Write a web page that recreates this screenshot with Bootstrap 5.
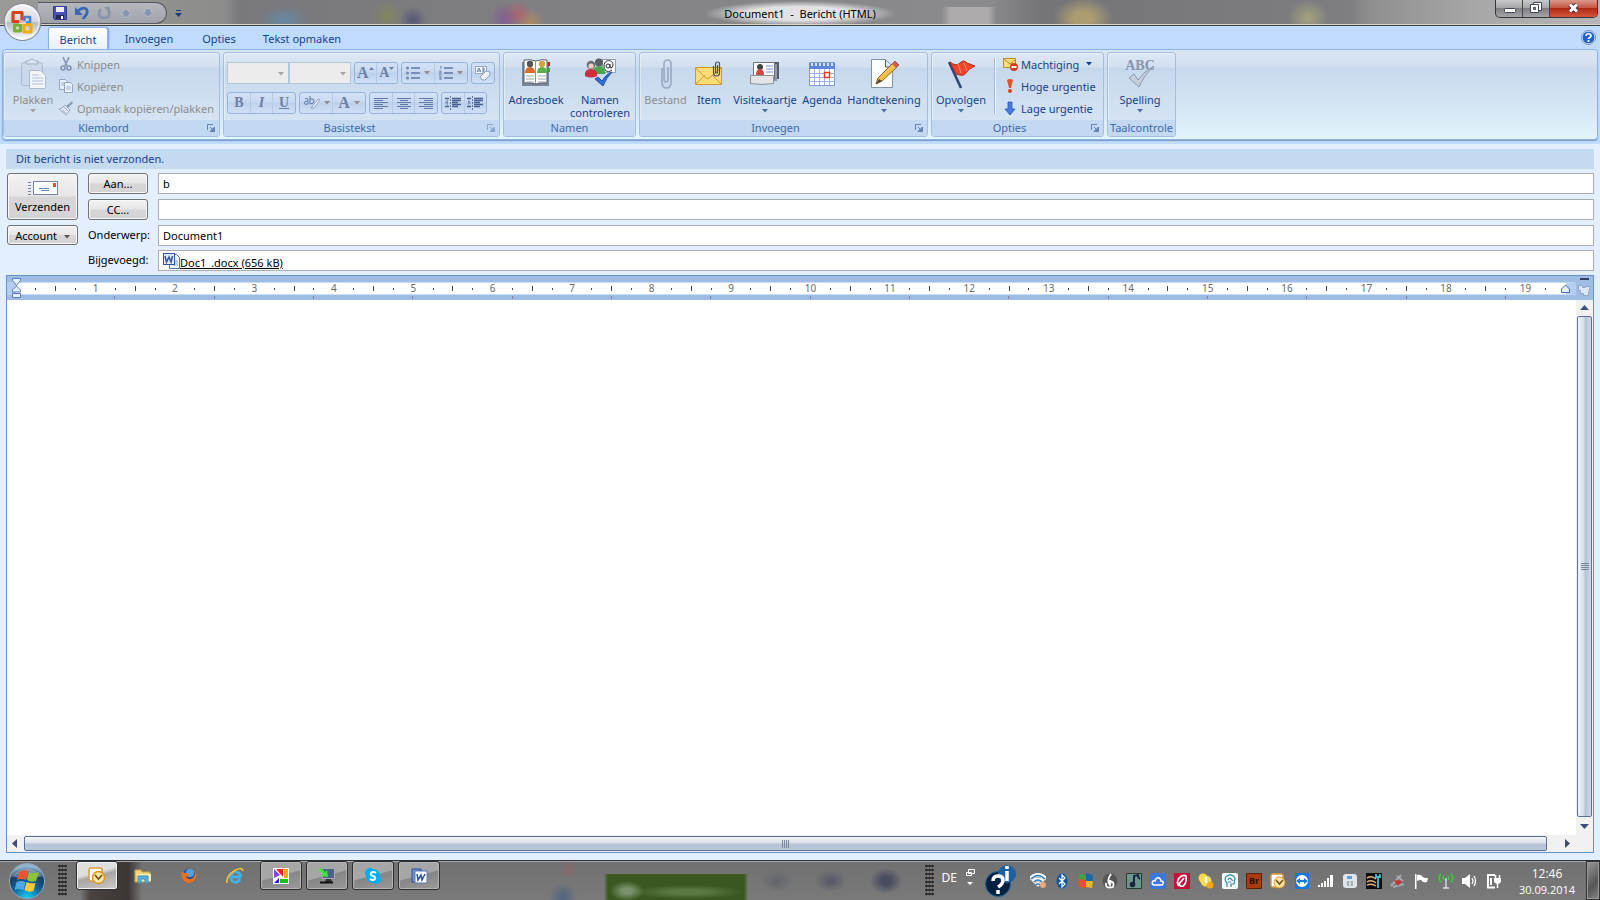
<!DOCTYPE html>
<html lang="nl">
<head>
<meta charset="utf-8">
<meta name="viewport" content="width=device-width, initial-scale=1">
<title>Document1 - Bericht (HTML)</title>
<link href="https://cdn.jsdelivr.net/npm/bootstrap@5.3.0/dist/css/bootstrap.min.css" rel="stylesheet">
<style>
:root{--ink:#15428b;--dim:#8d8d8d;--edge:#8db2e3}
body{font:11px/13px "Noto Sans","Open Sans",sans-serif;color:#000;background:#e3efff;height:100vh;overflow:hidden}
button,input,select{font:inherit;color:inherit}
button{background:none;border:0;padding:0}
svg{display:block;flex:none}
/* window title */
.titlebar{height:26px;border-bottom:1px solid #3a3d42;box-shadow:inset 0 -1px #d8d5c8;background:
 radial-gradient(ellipse 24px 14px at 284px 20px,#5b93b5aa,transparent),
 radial-gradient(ellipse 16px 16px at 387px 16px,#8a8c4699,transparent),
 radial-gradient(ellipse 14px 14px at 413px 20px,#3d3e7299,transparent),
 radial-gradient(ellipse 14px 18px at 504px 20px,#8148a099,transparent),
 radial-gradient(ellipse 16px 14px at 517px 14px,#c05866aa,transparent),
 radial-gradient(ellipse 14px 14px at 530px 22px,#c9924e99,transparent),
 linear-gradient(90deg,#c8c4c400 942px,#bdbabaaa 950px,#bdbabaaa 988px,#c8c4c400 996px) 0 7px no-repeat,
 radial-gradient(ellipse 30px 20px at 1083px 18px,#c0ab6cbb 30%,transparent),
 radial-gradient(ellipse 20px 18px at 1308px 18px,#b5b07cbb,transparent),
 linear-gradient(90deg,#9a9a98 0,#8c8c8b 225px,#78787d 240px,#7d7d80 440px,#858588 700px,#8b8b8f 990px,#757579 1040px,#7e7e82 1350px,#8f8f8f 1370px,#a8a8a8 1480px,#b6b6b6)}
.orb{left:3px;top:2px;z-index:3}
.quick{margin-left:38px;width:129px;height:22px;margin-top:2px;border:1px solid #55585e;border-left:0;border-radius:0 11px 11px 0;background:linear-gradient(#b4b7bc,#a0a4aa);padding-left:14px;gap:6px}
.quick button{width:16px;height:16px}
.wintitle{font-size:11px;line-height:27px}
.wintitle span{background:radial-gradient(closest-side,#e2e2e4 55%,#e2e2e400);padding:5px 20px}
.winbtns{height:18px;border:1px solid #33353a;border-top:0;border-radius:0 0 5px 5px;overflow:hidden;margin-right:2px;background:linear-gradient(#c9c9cc,#a6a6a9 45%,#7f7f84 50%,#a5a5a9)}
.winbtns button{width:27px;border-right:1px solid #44464b}
.winbtns .shut{width:47px;border:0;background:linear-gradient(#d99a8d,#c65744 45%,#b02a12 50%,#d4553a)}
/* tabs */
.tabsrow{height:23px;background:#bfdbff;padding-left:48px;color:var(--ink)}
.tabsrow .tab{color:var(--ink);text-decoration:none;line-height:25px;text-align:center}
.tabsrow .on{background:linear-gradient(#fff,#e8f1fb);border:1px solid #8db2e3;border-bottom:0;border-radius:3px 3px 0 0;margin-top:1px;line-height:23px;box-shadow:1px 0 2px #6f9be0}
.w-82{width:82px}.w-60{width:60px}.w-108{width:108px}
/* ribbon */
.ribbonwrap{background:#bfdbff;padding:0 2px 4px}
.ribbon{height:91px;border:1px solid var(--edge);border-radius:4px;padding:2px 0;gap:3px;background:linear-gradient(#dbe6f4 0,#cfddee 17px,#c9d9ed 18px,#d9e8f6 66px,#e3f5fd);box-shadow:0 1px 1px #7b97c0}
.group{height:85px;border:1px solid #a3bfdb;border-radius:3px;box-shadow:inset 1px 1px #ffffff66;background:linear-gradient(#dee8f5 0,#d1dfee 14px,#c7d8ed 15px,#d9e7f5);color:var(--ink);overflow:hidden}
.group .foot{height:16px;line-height:16px;background:#c2d9f1;color:#3e6aaa;text-align:center;position:relative;white-space:nowrap}
.launch{position:absolute;right:4px;top:4px}
.big{padding-top:5px;width:64px;line-height:13px;white-space:nowrap;display:flex;flex-direction:column;align-items:center}
.big>svg:first-child{margin-bottom:3px}
.big .arr{margin-top:3px;color:#4a6fa8}
.off .arr{color:inherit}
.smallb{height:22px;display:flex;align-items:center;gap:3px;white-space:nowrap}
.off{color:var(--dim)}
.off svg{opacity:.75}
.g-klem{width:217px}.g-bas{width:277px}.g-nam{width:133px}.g-inv{width:289px}.g-opt{width:173px}.g-taal{width:69px}
.w-plak{width:50px}.w-43{width:43px}.w-44{width:44px}.w-46{width:46px}.w-68{width:68px}.w-78{width:78px}.w-58{width:58px}
.fontrows{padding:9px 3px 0}
.rowgap{gap:3px}
.combo{appearance:none;height:22px;width:62px;border:1px solid #b4c6dc;background:#ececec;border-radius:0;opacity:1}
.combobox{position:relative}
.combobox svg{position:absolute;right:5px;top:10px}
.set{height:22px;border:1px solid #94b3de;border-radius:3px;background:linear-gradient(#d3e1f4,#c8d9f0 45%,#bdd1ec 50%,#cfe0f5);color:#6c7fa6}
.set button{flex:1;display:flex;align-items:center;justify-content:center;gap:4px;border-right:1px solid #b4cae8}
.set button:last-child{border:0}
.set .tight{gap:0}
.s24{width:24px}.s44{width:44px}.s46{width:46px}.s67{width:67px}.s69{width:69px}
.serif{font:bold 14px/18px "Liberation Serif",serif}
.divide{width:2px;background:#9db8dc;border-right:1px solid #f2f7fd;margin:5px 6px 6px 4px}
/* message header */
.info{margin:5px 6px 4px;height:20px;line-height:20px;background:#c3daf1;color:var(--ink);padding-left:10px}
.head{display:grid;grid-template-columns:71px 60px 1fr;grid-template-rows:21px 21px 20px 21px;gap:5px 10px;padding:0 6px 4px 7px}
.grey{border:1px solid #717171;border-radius:3px;background:linear-gradient(#f3f3f3,#e6e6e6 48%,#d6d6d6 52%,#d4d4d4);box-shadow:inset 0 0 0 1px #f8f8f8}
.send{grid-row:span 2}
.field{border:1px solid #abadb3;background:#fff;width:100%;padding:0 4px;min-width:0;border-radius:0;height:21px}
.head label,.head .lab{line-height:20px;white-space:nowrap}
.head a{color:#000}
/* editor */
.editor{margin:0 6px 7px;border:1px solid #6593cf;background:#fff;min-height:0}
.ruler{height:24px;background:#9ebce4;position:relative}
.ruler .scale{height:13px;margin-top:6px;background:#fff;border-top:1px solid #c8dcf4;border-bottom:1px solid #c8dcf4;color:#6a6a6a;font:10px/11px "Noto Sans",sans-serif;padding:0 11px 0 10px;border-left:9px solid #b4cdf0;border-right:10px solid #b4cdf0}
.scale span{flex:1 1 0;width:0;display:flex;justify-content:center;align-items:center}
.scale i{width:1px;height:5px;background:#445}
.scale i.dot{height:2px}
.stops{height:5px;padding:1px 70px 1px 9px}
.stops span{flex:1;border-right:1px solid #7d8796}
.mark1{position:absolute;left:5px;top:2px}
.mark2{position:absolute;right:5px;top:8px}
.vbar{width:17px;background:#f1f1f1}
.corner{height:24px;background:#9ebce4}
.vthumb{border:1px solid #5d6f96;border-radius:2px;margin:0 1px;background:linear-gradient(90deg,#f2f4f8,#d5dce8 45%,#b4c1d6 55%,#d0d9e8)}
.hbar{height:17px;background:#f1f1f1}
.hthumb{border:1px solid #5d6f96;border-radius:2px;margin:1px 0;background:linear-gradient(#f4f6fa,#dbe0ea 45%,#b6c2d6 55%,#b9c6da)}
/* taskbar */
.taskbar{height:40px;border-top:1px solid #2b2d31;box-shadow:inset 0 1px #a9a9a9;color:#fff;background:
 linear-gradient(90deg,#3b363300 80px,#4a4441 90px,#3b3633 128px,#3b363300 142px),
 radial-gradient(circle 10px at 569px 9px,#96666699,transparent),
 radial-gradient(circle 14px at 563px 36px,#3f5c84bb,transparent),
 radial-gradient(ellipse 17px 10px at 627px 30px,#8aa07acc 30%,transparent),
 radial-gradient(ellipse 56px 7px at 688px 31px,#6d8a55aa 30%,transparent),
 linear-gradient(90deg,#70707000 604px,#39571f 608px,#39571f 744px,#70707000 748px) 0 13px no-repeat,
 radial-gradient(ellipse 16px 11px at 777px 20px,#5b5f6bcc,transparent),
 radial-gradient(ellipse 16px 11px at 831px 20px,#4b5063cc,transparent),
 radial-gradient(ellipse 16px 13px at 886px 20px,#3d425acc 30%,transparent),
 linear-gradient(#707070,#7a7a7a)}
.grip{width:9px;height:32px;margin-top:3px;background:radial-gradient(circle,#2a2a2a 1px,#8c8c8c 2px) 0 0/3px 4px}
.grip1{margin:3px 9px 0 12px}
.task{width:42px;height:29px;display:flex;align-items:center;justify-content:center}
.task.run{border:1px solid #2d2d2d;border-radius:3px;box-shadow:inset 0 0 0 1px #b5b5b5;background:linear-gradient(165deg,#a6a6a6 48%,#868686 52%,#9a9a9a)}
.task.act{background:linear-gradient(165deg,#dedede 40%,#a9a5a2 52%,#cfcbc8);box-shadow:inset 0 0 0 1px #f1f1f1}
.lang{font-size:12px;margin:10px 9px 0 8px}
.helpico{margin:4px 0 0 10px}
.tray{padding-top:12px;gap:8px;margin-left:12px}
.clock{width:84px;padding:5px 0 0 6px;font:12px/16px "Open Sans",sans-serif;text-align:center}
.clock span{font-size:11px}
.peek{width:14px;border:1px solid #333;box-shadow:inset 0 0 0 1px #999;background:linear-gradient(135deg,#999,#555 60%,#888)}
</style>
</head>
<body class="d-flex flex-column">
<svg width="0" height="0" class="position-absolute"><defs>
<symbol id="dn" viewBox="0 0 6 4"><path d="M0 0h6L3 3.500z" fill="currentColor"/></symbol>
<symbol id="lau" viewBox="0 0 8 8"><path d="M.5 6V.5H6" fill="none" stroke="#6583b0"/><path d="M3 3l2 2M7.500 3v4.500H3z" fill="#6583b0" stroke="#6583b0"/></symbol>
<linearGradient id="orbg" x2="0" y2="1"><stop stop-color="#f6f6f8"/><stop offset=".48" stop-color="#d5d8de"/><stop offset=".52" stop-color="#b8bcc5"/><stop offset="1" stop-color="#fff"/></linearGradient>
<radialGradient id="wing" cx=".5" cy="1" r=".9"><stop stop-color="#19d3fa"/><stop offset=".5" stop-color="#0c5f97"/><stop offset=".8" stop-color="#1b3d61"/><stop offset="1" stop-color="#8fb2cc"/></radialGradient>
</defs></svg>

<header class="titlebar d-flex position-relative flex-shrink-0">
 <button class="orb position-absolute" aria-label="Office"><svg width="39" height="39" viewBox="0 0 39 39"><circle cx="19.500" cy="20" r="18.500" fill="url(#orbg)" stroke="#7b808a"/><circle cx="19.500" cy="20" r="16.500" fill="none" stroke="#fff" opacity=".7"/><g fill="none" stroke-linejoin="round"><rect x="10" y="10.500" width="9" height="9" stroke="#d4431a" stroke-width="3.200"/><rect x="21.500" y="15" width="5.500" height="5.500" stroke="#3f86d4" stroke-width="2.600"/><rect x="11.500" y="23" width="6" height="6" stroke="#74b030" stroke-width="2.800"/><rect x="21" y="22.500" width="7" height="7.500" stroke="#f2ab18" stroke-width="3.200"/></g><path d="M16 18h4v4h-4zM20 19h3v3h-3z" fill="#fff" opacity=".6"/></svg></button>
 <div class="quick d-flex align-items-center flex-shrink-0">
  <button aria-label="Opslaan"><svg width="16" height="16"><path d="M1.500 1.500h13v13h-12l-1-1z" fill="#4a52b5" stroke="#333a8c"/><path d="M4 2h8v5H4z" fill="#eef"/><path d="M4 10h8v4H4z" fill="#222a55"/><path d="M9 11h2v3H9z" fill="#fff"/></svg></button>
  <button aria-label="Ongedaan maken"><svg width="16" height="16"><path d="M4 6c5-5 10-3 9 2-1 3-3 4-4 6" fill="none" stroke="#3b66b8" stroke-width="2.800"/><path d="M1 2v8h8z" fill="#3b66b8"/></svg></button>
  <button aria-label="Opnieuw"><svg width="16" height="16"><path d="M5 4c-4 4-2 9 3 9 5 0 7-5 4-8" fill="none" stroke="#8593ab" stroke-width="2.400"/><path d="M8 2h6v5z" fill="#8593ab"/></svg></button>
  <button aria-label="Vorige"><svg width="16" height="16"><path d="M8 4l6 5h-3v3H5V9H2z" fill="#8796ae" stroke="#b7c0cd" stroke-width=".8"/></svg></button>
  <button aria-label="Volgende"><svg width="16" height="16"><path d="M8 12l6-5h-3V4H5v3H2z" fill="#8796ae" stroke="#b7c0cd" stroke-width=".8"/></svg></button>
 </div>
 <button class="ms-2" aria-label="Werkbalk aanpassen"><svg width="7" height="8"><path d="M1 1.500h5" stroke="#1a3a78"/><path d="M0 4h7L3.500 8z" fill="#1a3a78"/></svg></button>
 <div class="wintitle position-absolute start-0 end-0 text-center pe-none"><span>Document1&nbsp; -&nbsp; Bericht (HTML)</span></div>
 <div class="winbtns d-flex ms-auto">
  <button aria-label="Minimaliseren"><svg width="26" height="17"><rect x="8.500" y="8.500" width="11" height="4" rx="1" fill="#fff" stroke="#444659"/></svg></button>
  <button aria-label="Verkleinen"><svg width="26" height="17"><path d="M10.500 2.500h8v8h-8z" fill="#fff" stroke="#444659"/><path d="M7.500 4.500h8v8h-8z" fill="#fff" stroke="#444659"/><path d="M10.500 7.500h2v2h-2z" fill="#999" stroke="#444659"/></svg></button>
  <button class="shut" aria-label="Sluiten"><svg width="47" height="17"><path d="M20 4.500l7 7m0-7l-7 7" stroke="#4a3340" stroke-width="5"/><path d="M20 4.500l7 7m0-7l-7 7" stroke="#fff" stroke-width="3"/></svg></button>
 </div>
</header>

<nav class="tabsrow d-flex flex-shrink-0">
 <a href="#" class="tab on w-60">Bericht</a><a href="#" class="tab w-82">Invoegen</a><a href="#" class="tab w-58">Opties</a><a href="#" class="tab w-108">Tekst opmaken</a>
 <button class="ms-auto me-1" aria-label="Help"><svg width="15" height="15"><circle cx="7.500" cy="7.500" r="6.500" fill="#2360d0" stroke="#fff"/><circle cx="7.500" cy="7.500" r="7" fill="none" stroke="#6a8cc4"/><path d="M5 6c0-3 5-3 5 0 0 1.500-2.500 1.500-2.500 3M7.500 10v2" fill="none" stroke="#fff" stroke-width="1.700"/></svg></button>
</nav>

<div class="ribbonwrap flex-shrink-0"><div class="ribbon d-flex">
 <section class="group g-klem flex-shrink-0 d-flex flex-column">
  <div class="d-flex flex-fill ps-1">
   <button class="big w-plak off" disabled><svg width="32" height="32"><rect x="4.500" y="4.500" width="21" height="23" rx="2" fill="#ccd8ea" stroke="#9fafc8"/><path d="M9 6V3h3q3-4 6 0h3v3z" fill="#dfe6f0" stroke="#8d9db8"/><path d="M12.500 12.500h11l5 5v13h-16z" fill="#fff" stroke="#9fafc8"/><path d="M15 17h7m-7 3h11m-11 3h11m-11 3h11" stroke="#a9bbd8"/></svg>Plakken<svg class="arr" width="6" height="4"><use href="#dn"/></svg></button>
   <div class="off">
    <button class="smallb" disabled><svg width="16" height="16"><path d="M5 1l4 9M11 1L7 10" stroke="#6d7c98" stroke-width="1.600"/><g fill="none" stroke="#6d7c98" stroke-width="1.600"><circle cx="5" cy="12" r="2"/><circle cx="11" cy="12" r="2"/></g></svg>Knippen</button>
    <button class="smallb" disabled><svg width="16" height="16"><g fill="#f2f6fb" stroke="#7f93b5"><path d="M1.500 1.500h6l2 2v8h-8z"/><path d="M6.500 4.500h6l2 2v8h-8z"/></g><path d="M3 5h3m-3 2h3m2 2h5m-5 2h5" stroke="#93a8c9"/></svg>Kopiëren</button>
    <button class="smallb" disabled><svg width="16" height="16"><path d="M14 1l1 2-5 5-2-2z" fill="#7c8ca8"/><path d="M7 5l5 5-4 5-7-6 3-1z" fill="#e8edf4" stroke="#8494b0"/><path d="M4 10l4 3M6 7l4 4" stroke="#8494b0"/></svg>Opmaak kopiëren/plakken</button>
   </div>
  </div>
  <div class="foot"><span class="me-3">Klembord</span><svg class="launch" width="8" height="8"><use href="#lau"/></svg></div>
 </section>

 <section class="group g-bas flex-shrink-0 d-flex flex-column">
  <div class="flex-fill fontrows">
   <div class="d-flex rowgap">
    <div class="d-flex">
     <div class="combobox off"><select class="combo" disabled aria-label="Lettertype"><option></option></select><svg width="6" height="4"><use href="#dn"/></svg></div>
     <div class="combobox off"><select class="combo" disabled aria-label="Tekengrootte"><option></option></select><svg width="6" height="4"><use href="#dn"/></svg></div>
    </div>
    <div class="set d-flex s44"><button class="tight" disabled aria-label="Groter"><span class="serif fs-6">A</span><svg width="5" height="12"><path d="M0 3h5L2.500 0z" fill="#6c7fa6"/></svg></button><button class="tight" disabled aria-label="Kleiner"><span class="serif">A</span><svg width="5" height="12"><path d="M0 0h5L2.500 3z" fill="#6c7fa6"/></svg></button></div>
    <div class="set d-flex s67"><button disabled aria-label="Opsommingstekens"><svg width="14" height="14"><path d="M5 2h9M5 7h9M5 12h9" stroke="#5f78a5" stroke-width="1.300"/><g fill="#7288b0"><circle cx="1.500" cy="2" r="1.500"/><circle cx="1.500" cy="7" r="1.500"/><circle cx="1.500" cy="12" r="1.500"/></g></svg><svg class="off" width="6" height="4"><use href="#dn"/></svg></button><button disabled aria-label="Nummering"><svg width="14" height="14"><path d="M5 2h9M5 7h9M5 12h9" stroke="#5f78a5" stroke-width="1.300"/><path d="M1 0h1v3M0 5h2v2H0v1h3M0 10h2v4H0m0-2h2" fill="none" stroke="#7288b0"/></svg><svg class="off" width="6" height="4"><use href="#dn"/></svg></button></div>
    <div class="set d-flex s24"><button disabled aria-label="Opmaak wissen"><svg width="18" height="18"><rect x="1.500" y="2.500" width="11" height="7" fill="#fff" stroke="#93a7c8"/><path d="M3 8l2-4 2 4M4 7h2m2-3h2v4H8M8 6h2" stroke="#5f78a5" fill="none"/><path d="M6 13l6-6 4 1v3l-5 5H8z" fill="#eef2f8" stroke="#8ba0c2"/></svg></button></div>
   </div>
   <div class="d-flex rowgap pt-2">
    <div class="set d-flex s69"><button disabled class="serif">B</button><button disabled class="serif fst-italic">I</button><button disabled class="serif text-decoration-underline">U</button></div>
    <div class="set d-flex s67"><button disabled aria-label="Markeren"><svg width="17" height="16"><path d="M2 4q3-2 3 1v4q-4 1-4-1t4-2M7 1v8q4 0 4-3T7 4" fill="none" stroke="#5f78a5"/><path d="M8 13l7-9 2 1-6 8z" fill="#eef2f8" stroke="#8ba0c2"/></svg><svg class="off" width="6" height="4"><use href="#dn"/></svg></button><button disabled><span class="serif fs-6">A</span><svg class="off" width="6" height="4"><use href="#dn"/></svg></button></div>
    <div class="set d-flex s69"><button disabled aria-label="Links"><svg width="14" height="12"><path d="M0 1.500h14M0 3.500h9M0 5.500h14M0 7.500h9M0 9.500h14M0 11.500h9" stroke="#5f78a5"/></svg></button><button disabled aria-label="Midden"><svg width="14" height="12"><path d="M0 1.500h14M3 3.500h8M0 5.500h14M3 7.500h8M0 9.500h14M3 11.500h8" stroke="#5f78a5"/></svg></button><button disabled aria-label="Rechts"><svg width="14" height="12"><path d="M0 1.500h14M5 3.500h9M0 5.500h14M5 7.500h9M0 9.500h14M5 11.500h9" stroke="#5f78a5"/></svg></button></div>
    <div class="set d-flex s46"><button disabled aria-label="Minder inspringen"><svg width="16" height="14"><path d="M0 2.500h4M7 2.500h9M7 4.500h9M7 6.500h6M7 8.500h9M0 10.500h4M7 10.500h6" stroke="#46608f" stroke-width="1.300"/><path d="M5.500 0v14" stroke="#5f78a5" stroke-dasharray="2 1"/><path d="M0 6.500l3-3v6z" fill="#7d93bb"/></svg></button><button disabled aria-label="Meer inspringen"><svg width="16" height="14"><path d="M0 2.500h4M7 2.500h9M7 4.500h9M7 6.500h6M7 8.500h9M0 10.500h4M7 10.500h6" stroke="#46608f" stroke-width="1.300"/><path d="M5.500 0v14" stroke="#5f78a5" stroke-dasharray="2 1"/><path d="M4 6.500l-3-3v6z" fill="#7d93bb"/></svg></button></div>
   </div>
  </div>
  <div class="foot"><span class="me-4">Basistekst</span><svg class="launch" width="8" height="8" opacity=".6"><use href="#lau"/></svg></div>
 </section>

 <section class="group g-nam flex-shrink-0 d-flex flex-column">
  <div class="d-flex flex-fill">
   <button class="big"><svg width="32" height="32"><path d="M2 4h27v24H2z" fill="#7a8799"/><path d="M4 2q6-1 12 1 6-2 11-1v23q-6-1-11 1-6-2-12-1z" fill="#fff" stroke="#55606f"/><path d="M15.500 3v23" stroke="#8a93a0"/><path d="M28 4h2v4h-2z" fill="#c22"/><path d="M28 10h2v4h-2z" fill="#3a3"/><circle cx="10" cy="6" r="3.200" fill="#555"/><path d="M5 15q0-6 5-6t5 6z" fill="#d9692a"/><circle cx="22" cy="6" r="3.200" fill="#d9a23a"/><path d="M17 15q0-6 5-6t5 6z" fill="#5cb043"/><path d="M6 18h8m-8 3h8m-8 3h8m4-6h8m-8 3h8m-8 3h8" stroke="#9aa5b5"/></svg>Adresboek</button>
   <button class="big"><svg width="32" height="32"><path d="M18.500 1.500h13v13h-13z" fill="#f4f7fb" stroke="#93a0b4"/><circle cx="24" cy="8" r="2" fill="none" stroke="#333"/><path d="M26 6v4q3 0 3-3c0-6-9-6-9 1s6 6 8 4" fill="none" stroke="#333"/><circle cx="15" cy="4.500" r="4" fill="#595f66"/><path d="M9 16q0-8 6-8t6 8z" fill="#44a648"/><circle cx="7" cy="7" r="4.300" fill="#666b72"/><circle cx="7" cy="8" r="2.600" fill="#efd3bd"/><path d="M1 18q-1-7 6-7t6 7q-6 3-12 0z" fill="#c9303a"/><path d="M11 21l3-2 4 4q4-7 10-9-6 6-9 14z" fill="#2a6fd6" stroke="#1c50a8"/></svg>Namen<br>controleren</button>
  </div>
  <div class="foot">Namen</div>
 </section>

 <section class="group g-inv flex-shrink-0 d-flex flex-column">
  <div class="d-flex flex-fill ps-1">
   <button class="big w-43 off" disabled><svg width="32" height="32"><path d="M12 10v14q0 6 4.500 6t4.500-6V6q0-4-3.500-4T14 6v15q0 3 2 3t2-3V9" fill="none" stroke="#8d9cb8" stroke-width="1.700"/></svg>Bestand</button>
   <button class="big w-44"><svg width="32" height="32"><path d="M2.500 9.500h26v17h-26z" fill="#fbdc75" stroke="#c89b38"/><path d="M3 26l9-9M28 26l-9-9M3 10q12 14 13 10L28 10" fill="none" stroke="#c89b38"/><path d="M20.500 8v7q0 3 3 3t3-3V6q0-2-2-2t-2 2v9h2V7" fill="none" stroke="#4a5260" stroke-width="1.200"/></svg>Item</button>
   <button class="big w-68"><svg width="32" height="32"><path d="M10 4h20v17H10z" fill="#555d68"/><path d="M8 6h20v17H8z" fill="#909aa8"/><path d="M4.500 4.500h21v17h-21z" fill="#fff" stroke="#6b7480"/><circle cx="11" cy="9" r="3" fill="#444"/><path d="M7 17q0-6 4-6t4 6z" fill="#cf4a3c"/><path d="M17 8h7m-7 3h7m-7 3h7" stroke="#6c93d0"/><path d="M1.500 17.500h23v8q-12 2-23 0z" fill="#e2e4e8" stroke="#8b919b"/></svg>Visitekaartje<svg class="arr" width="6" height="4"><use href="#dn"/></svg></button>
   <button class="big w-46"><svg width="32" height="32"><path d="M3.500 4.500h25v23h-25z" fill="#fff" stroke="#7f9bd0"/><path d="M3 5h26v6H3z" fill="#5f86d8"/><path d="M6 5v3m4-3v3m4-3v3m4-3v3m4-3v3m4-3v3" stroke="#fff" stroke-width="1.500"/><path d="M4 15.500h24M4 19.500h24M4 23.500h24M8.500 11v16M13.500 11v16M18.500 11v16M23.500 11v16" stroke="#9cb4e0"/><rect x="18.500" y="14.500" width="5" height="5" fill="#fff" stroke="#e2401c" stroke-width="1.500"/></svg>Agenda</button>
   <button class="big w-78"><svg width="32" height="32"><path d="M3.500 1.500h14l7 7v21h-21z" fill="#fff" stroke="#8390a6"/><path d="M17.500 2v7h7" fill="#dfe7f2" stroke="#4a5b7a"/><path d="M27 3l4 4L14 23l-6 3 2-6z" fill="#f4bf4a" stroke="#8c6420"/><path d="M27 3l4 4-3 3-4-4z" fill="#c9605a"/><path d="M8 26l3-5 3 2z" fill="#444"/></svg>Handtekening<svg class="arr" width="6" height="4"><use href="#dn"/></svg></button>
  </div>
  <div class="foot"><span class="me-3">Invoegen</span><svg class="launch" width="8" height="8"><use href="#lau"/></svg></div>
 </section>

 <section class="group g-opt flex-shrink-0 d-flex flex-column">
  <div class="d-flex flex-fill">
   <button class="big w-58 ms-0"><svg width="32" height="32"><path d="M4 4l12 26" stroke="#2e4775" stroke-width="2.600"/><path d="M5 4q6 5 10 1t7 0l8 3q-7 3-9 7t-10 1z" fill="#e8472c" stroke="#b32d18"/><path d="M13 6l3 9m3-10l3 8" stroke="#f58a70"/></svg>Opvolgen<svg class="arr" width="6" height="4"><use href="#dn"/></svg></button>
   <span class="divide"></span>
   <div>
    <button class="smallb"><svg width="16" height="16"><path d="M1.500 2.500h12v9h-12z" fill="#fbdc75" stroke="#b58b2e"/><path d="M2 3l6 5 6-5" fill="none" stroke="#b58b2e"/><circle cx="12" cy="11" r="4" fill="#d83a20"/><path d="M9.500 11h5" stroke="#fff" stroke-width="2"/></svg>Machtiging<svg class="ms-1" width="6" height="4"><use href="#dn"/></svg></button>
    <button class="smallb"><svg width="16" height="16"><path d="M5 2q3-2 6 0L9 10H7z" fill="#e8502c"/><circle cx="8" cy="13" r="2" fill="#d8401e"/></svg>Hoge urgentie</button>
    <button class="smallb"><svg width="16" height="16"><path d="M6 2h4v7h3l-5 6-5-6h3z" fill="#4a7be0" stroke="#2c50a8" stroke-width=".8"/></svg>Lage urgentie</button>
   </div>
  </div>
  <div class="foot"><span class="me-3">Opties</span><svg class="launch" width="8" height="8"><use href="#lau"/></svg></div>
 </section>

 <section class="group g-taal flex-shrink-0 d-flex flex-column">
  <div class="flex-fill">
   <button class="big"><svg width="32" height="32"><text x="16" y="12" text-anchor="middle" font-family="Liberation Serif" font-weight="bold" font-size="14" fill="#8795ad">ABC</text><path d="M5 20l5-4 4 6q6-9 16-14-10 9-15 21z" fill="#c5cedd" stroke="#8a98b2"/></svg>Spelling<svg class="arr" width="6" height="4"><use href="#dn"/></svg></button>
  </div>
  <div class="foot">Taalcontrole</div>
 </section>
</div></div>

<div class="info flex-shrink-0">Dit bericht is niet verzonden.</div>
<form class="head flex-shrink-0">
 <button type="button" class="grey send d-flex flex-column align-items-center justify-content-center"><svg width="30" height="16" class="mb-1"><rect x="5.500" y="1.500" width="24" height="13" fill="#fff" stroke="#7886a3"/><path d="M0 2.500h3m-3 3h3m-3 3h3m-3 3h3m-3 3h3" stroke="#7886a3"/><path d="M25 3h3v4h-3z" fill="#e0502c"/><path d="M11 8.500h10m-8 2h8" stroke="#6b83b8"/></svg>Verzenden</button>
 <button type="button" class="grey">Aan...</button><input class="field" aria-label="Aan" value="b">
 <button type="button" class="grey">CC...</button><input class="field" aria-label="CC" value="">
 <button type="button" class="grey">Account&nbsp;<svg class="d-inline-block ms-1 align-middle" width="6" height="4" color="#555"><use href="#dn"/></svg></button>
 <label for="subj">Onderwerp:</label><input class="field" id="subj" value="Document1">
 <span></span><span class="lab">Bijgevoegd:</span>
 <div class="field d-flex align-items-center"><svg width="17" height="17"><path d="M6.500 2.500h7l3 3v11h-10z" fill="#f4f8ff" stroke="#4c73b8"/><path d="M9 9h6m-6 2h6m-6 2h6" stroke="#8aa8dc"/><rect x=".5" y="1.500" width="11" height="11" fill="#dfe9f9" stroke="#2c55a8"/><path d="M2 4l1.500 6L6 5l2 5 1.500-6" fill="none" stroke="#2c55a8" stroke-width="1.500"/></svg><a href="#" class="pt-1">Doc1_.docx (656 kB)</a></div>
</form>

<main class="editor d-flex flex-column flex-grow-1">
 <div class="d-flex flex-grow-1">
  <div class="flex-grow-1 d-flex flex-column">
   <div class="ruler d-flex flex-column">
    <div class="scale d-flex" id="scale"></div>
    <div class="stops d-flex" id="stops"></div>
    <svg class="mark1" width="10" height="20" fill="#e6f0fc" stroke="#5a7fb8"><path d="M.5.500h8v2l-4 5-4-5zM4.500 8l4 4v2h-8v-2zM.5 15.500h8v4h-8z"/></svg>
    <svg class="mark2" width="10" height="10" fill="#e6f0fc" stroke="#4468a8"><path d="M4.500 1l4 4v3.500h-8V5z"/></svg>
   </div>
   <div class="flex-grow-1" contenteditable="true" role="textbox" aria-label="Bericht"></div>
  </div>
  <div class="vbar d-flex flex-column align-items-center">
   <div class="corner w-100"><svg width="16" height="24"><path d="M4 3h9" stroke="#2f3f66" stroke-width="2"/><path d="M2.500 9.500h4v2h3v-1h4v5h-1v4h-5v-2h-3v-3h-2z" fill="#dce8f8" stroke="#8fa9cf"/></svg></div>
   <svg width="9" height="16"><path d="M0 10h9L4.500 5z" fill="#3d4d76"/></svg>
   <div class="vthumb flex-grow-1 align-self-stretch d-flex align-items-center justify-content-center"><svg width="8" height="8"><path d="M0 .5h8m-8 2h8m-8 2h8m-8 2h8" stroke="#7a879f"/></svg></div>
   <svg width="9" height="18"><path d="M0 7h9l-4.500 5z" fill="#3d4d76"/></svg>
  </div>
 </div>
 <div class="hbar d-flex align-items-center flex-shrink-0">
  <svg width="17" height="9"><path d="M10 0v9L5 4.500z" fill="#3d4d76"/></svg>
  <div class="hthumb flex-grow-1 align-self-stretch d-flex align-items-center justify-content-center"><svg width="8" height="8"><path d="M.5 0v8m2-8v8m2-8v8m2-8v8" stroke="#7a879f"/></svg></div>
  <svg width="46" height="9"><path d="M18 0v9l5-4.500z" fill="#3d4d76"/></svg>
 </div>
</main>

<footer class="taskbar d-flex flex-shrink-0">
 <button class="ms-2 align-self-center" aria-label="Start"><svg width="38" height="38"><circle cx="19" cy="19" r="17.500" fill="url(#wing)" stroke="#8fa9bd"/><path d="M4 14q15-14 30 0-15 6-30 0z" fill="#fff" opacity=".3"/><path d="M11 10q5-3 9-1l-2 9q-5-2-9 0z" fill="#e8582c"/><path d="M21 10q4 2 10 0l-3 9q-5 2-9-1z" fill="#8cc43c"/><path d="M8.500 20q5-2 9 0l-2 8q-5-2-9 0z" fill="#4ea8e8"/><path d="M18.500 20q4 2 9 1l-2 8q-5 2-9-1z" fill="#fbc83a"/></svg></button>
 <span class="grip grip1 flex-shrink-0"></span>
 <div class="d-flex gap-1">
  <button class="task run act" aria-label="Outlook"><svg width="18" height="18"><rect x="1" y="1" width="13" height="13" rx="2" fill="#fff" stroke="#e09a3a" stroke-width="1.500"/><circle cx="10.500" cy="10.500" r="6" fill="#fbe4a8" stroke="#dd9226" stroke-width="1.500"/><path d="M7 8l3.500 4L14 8" fill="none" stroke="#7a4b14" stroke-width="1.600"/></svg></button>
  <button class="task" aria-label="Verkenner"><svg width="18" height="18"><path d="M1 3h6l1 2h8v10H1z" fill="#f0d67a" stroke="#c7a240"/><path d="M3 7h14v7H3z" fill="#faecb0"/><path d="M4 16V9h10v7h-3v-4H7v4z" fill="#58b4e0" stroke="#3a8cc0"/></svg></button>
  <button class="task" aria-label="Firefox"><svg width="18" height="18"><circle cx="9" cy="9" r="7" fill="#274f9c"/><circle cx="10" cy="6" r="4" fill="#4fa3e0"/><path d="M2 4q1 2 5 2l2 2-3 2q3 4 7 1 3-3 1-8 4 5 1 10-5 6-11 1Q0 10 2 4z" fill="#e8711a"/></svg></button>
  <button class="task" aria-label="Internet Explorer"><svg width="18" height="18"><path d="M14 12q-2 4-6 3-5-2-3-7 3-5 8-2 2 2 1 4H5" fill="none" stroke="#44b0ea" stroke-width="2.800"/><path d="M1 16Q0 9 8 4q8-5 9 0" fill="none" stroke="#f2c22c" stroke-width="1.600"/></svg></button>
  <button class="task run" aria-label="Picasa"><svg width="16" height="16"><path d="M0 0h16v16H0z" fill="#fff"/><path d="M1 1v9l6-3z" fill="#8a44d8"/><path d="M3 1h7v8z" fill="#e22"/><path d="M11 1h4v9h-4z" fill="#f4a81c"/><path d="M7 11h8v4H7z" fill="#16c016"/><path d="M1 15l5-5v5z" fill="#22c"/></svg></button>
  <button class="task run" aria-label="PuTTY"><svg width="18" height="18"><path d="M4.500 1.500h12v10h-12z" fill="#4a6488" stroke="#a4aeba"/><path d="M8 12h5l1 3H7z" fill="#333"/><path d="M1 3l2-2 4 4 2-2 1 7-7-1 2-2z" fill="#35e835"/><path d="M2 15.500h13" stroke="#111" stroke-width="2"/></svg></button>
  <button class="task run" aria-label="Skype"><svg width="18" height="18"><circle cx="6" cy="6" r="5" fill="#00aff0"/><circle cx="12" cy="12" r="5" fill="#00aff0"/><circle cx="9" cy="9" r="7" fill="#00aff0"/><path d="M12 6q-3-2-5 0-1 2 2 3t2 3q-2 2-5 0" fill="none" stroke="#fff" stroke-width="2"/></svg></button>
  <button class="task run" aria-label="Word"><svg width="18" height="18"><path d="M2 2h9v13H2z" fill="#6d90cf" stroke="#2c4f9c"/><path d="M5 4h12v12H5z" fill="#fff" stroke="#5577b8"/><path d="M7 7l1 6 3-5 1 5 3-6" fill="none" stroke="#2c4f9c" stroke-width="1.500"/></svg></button>
 </div>
 <span class="grip ms-auto flex-shrink-0"></span>
 <span class="lang">DE</span>
 <svg width="9" height="19" class="mt-2" fill="none" stroke="#fff"><path d="M2.500.500h6v4h-6zM.5 3.500h5v3h-5z" fill="#777"/><path d="M1 13h6l-3 3z" fill="#fff" stroke="none"/></svg>
 <svg class="helpico" width="33" height="33"><circle cx="13" cy="19" r="12.500" fill="#08203f" stroke="#1565a8"/><circle cx="22" cy="9" r="9" fill="#1e5f9f"/><path d="M8 16q0-5 5-5t5 4-5 7M13 25v4" fill="none" stroke="#fff" stroke-width="3.500"/><path d="M22 6v10M22 1v3" stroke="#fff" stroke-width="3.500"/></svg>
 <div class="tray d-flex">
  <svg width="16" height="16" fill="none"><path d="M0 6q8-8 16 0M3 9q5-5 10 0M6 12q2-2 4 0" stroke="#fff" stroke-width="4"/><path d="M1 6q7-7 14 0M4 9q4-4 8 0M6 12q2-2 4 0" stroke="#2e7cc4" stroke-width="1.600"/><circle cx="13" cy="12" r="3" fill="#e8a87a"/></svg>
  <svg width="16" height="16"><ellipse cx="8" cy="8" rx="5.500" ry="7.500" fill="#0a56a8"/><path d="M5 5l6 6-3 3V2l3 3-6 6" fill="none" stroke="#fff" stroke-width="1.200"/></svg>
  <svg width="16" height="16"><path d="M1 1l7 1v6H0z" fill="#4aa03c"/><path d="M8 0l7 2v6H8z" fill="#1b6aa8"/><path d="M0 6l8 1v8l-7-1z" fill="#e8502c"/><path d="M8 8h7l-1 7-6-1z" fill="#e8b42c"/></svg>
  <svg width="16" height="16"><circle cx="8" cy="8" r="7.500" fill="#555"/><path d="M9 1q-5 7-1 11 1-2 0-4 5 1 3 6-8 2-7-4" fill="none" stroke="#fff" stroke-width="1.800"/></svg>
  <svg width="16" height="16"><path d="M.5.500h15v15H.5z" fill="#6d978c" stroke="#263c38"/><path d="M8 12V3l4-1q0 3 2 4" fill="none" stroke="#1a2444" stroke-width="2"/><circle cx="6.500" cy="11.500" r="2.800" fill="#1a2444"/></svg>
  <svg width="16" height="16"><rect width="16" height="16" rx="3" fill="#3a78dc"/><path d="M4 12q-3-1-1-4 1-1 2 0 1-4 4-3 2 1 2 3 3 0 2 3l-1 1z" fill="none" stroke="#fff" stroke-width="1.500"/></svg>
  <svg width="16" height="16"><path d="M0 0h16v16H0z" fill="#c0143c"/><path d="M5 13q-3-3 0-8 4-4 7-2 1 7-3 10-3 1-4-2l5-6" fill="none" stroke="#fff" stroke-width="1.700"/></svg>
  <svg width="16" height="16"><circle cx="5" cy="5" r="4.500" fill="#f8d840"/><circle cx="8" cy="8" r="5.500" fill="#f8dc50"/><path d="M8 4v5l3 2" fill="none" stroke="#fff" stroke-width="2"/><circle cx="12" cy="12" r="3.500" fill="#f4a81c"/></svg>
  <svg width="16" height="16"><rect width="16" height="16" rx="2" fill="#f4f9fb"/><path d="M5 14v-4q-4-4 0-7 5-3 8 2l-1 6H9v3M6 7q1-3 3-1t2 1M6 9h3" fill="none" stroke="#2e8cb0" stroke-width="1.200"/></svg>
  <svg width="16" height="16"><path d="M.5.500h15v15H.5z" fill="#a83c0c" stroke="#5a2008"/><text x="8" y="11" text-anchor="middle" font-size="9" font-weight="bold" font-family="Open Sans" fill="#2c1004">Br</text></svg>
  <svg width="16" height="16"><rect x="1" y="1" width="12" height="13" rx="2" fill="#fff" stroke="#e09a3a" stroke-width="1.500"/><circle cx="9.500" cy="9.500" r="5.500" fill="#fbe4a8" stroke="#dd9226"/><path d="M6 7l3.500 4L13 7" fill="none" stroke="#7a4b14" stroke-width="1.500"/></svg>
  <svg width="16" height="16"><rect x="1" width="14" height="16" rx="1" fill="#1578dc"/><circle cx="8" cy="8" r="6" fill="#fff"/><path d="M2 8l4-3v2h4V5l4 3-4 3V9H6v2z" fill="#1578dc"/></svg>
  <svg width="16" height="16" fill="#fff"><path d="M0 12h2v2H0zM3 10h2v4H3zM6 8h2v6H6zM9 5h2v9H9zM12 2h3v12h-3z"/></svg>
  <svg width="16" height="16"><rect x="1" y="1" width="14" height="14" rx="3" fill="#dfe6ea"/><path d="M5 3h5v3H5z" fill="#5aa0d8"/><path d="M5 8h6v5H5z" fill="#a4b0b8"/><path d="M8 8v5" stroke="#fff"/></svg>
  <svg width="16" height="16"><path d="M0 0h16v16H0z" fill="#0c0c0c"/><path d="M1 5q5-3 9 1M1 9q5-3 9 1M1 12q5-2 9 1" fill="none" stroke="#e0b47c" stroke-width="1.500"/><path d="M12 4v11M10 1v3h4V1" fill="none" stroke="#44c0d8" stroke-width="1.800"/></svg>
  <svg width="16" height="16"><path d="M1 13l10-11M3 14l11-3M7 3l6 5" stroke="#a5aab0" stroke-width="2"/><path d="M4 7l8 1-4 5z" fill="#d82c2c"/></svg>
  <svg width="16" height="16" fill="#fff"><path d="M1 1h1.500v15H1zM3 2q4-1 5 1t6 2l-1 4q-4 1-5-1T3 8z"/></svg>
  <svg width="16" height="16" fill="none" stroke="#33d833" stroke-width="1.400"><path d="M3 1q-4 4 0 8M6 3q-2 2 0 4M13 1q4 4 0 8M10 3q2 2 0 4"/><path d="M8 5v10M5 15h6" stroke="#ddd"/></svg>
  <svg width="16" height="16"><path d="M0 5h3l5-4v14l-5-4H0z" fill="#fff"/><path d="M10 5q2 3 0 6M12 3q3 5 0 10" fill="none" stroke="#fff" stroke-width="1.300"/></svg>
  <svg width="16" height="16"><path d="M9 2H2v12.500h7" fill="none" stroke="#fff" stroke-width="2"/><path d="M4 5h2v7H4z" fill="#fff"/><path d="M9.500 2v3m4-3v3M11.500 10v5" stroke="#fff" stroke-width="1.500"/><path d="M8 5h7v4q-3.500 4-7 0z" fill="#fff"/></svg>
 </div>
 <div class="clock">12:46<br><span>30.09.2014</span></div>
 <button class="peek" aria-label="Bureaublad weergeven"></button>
</footer>

<script src="https://cdn.jsdelivr.net/npm/bootstrap@5.3.0/dist/js/bootstrap.bundle.min.js"></script>
<script>
// quarter-centimetre ruler marks: number, dot, tick, dot
let marks = '';
for (let k = 1; k <= 77; k++) marks += '<span>' + (k % 4 === 0 ? k / 4 : k % 2 ? '<i class="dot"></i>' : '<i></i>') + '</span>';
document.getElementById('scale').innerHTML = marks;
document.getElementById('stops').innerHTML = '<span></span>'.repeat(15);
</script>
</body>
</html>
